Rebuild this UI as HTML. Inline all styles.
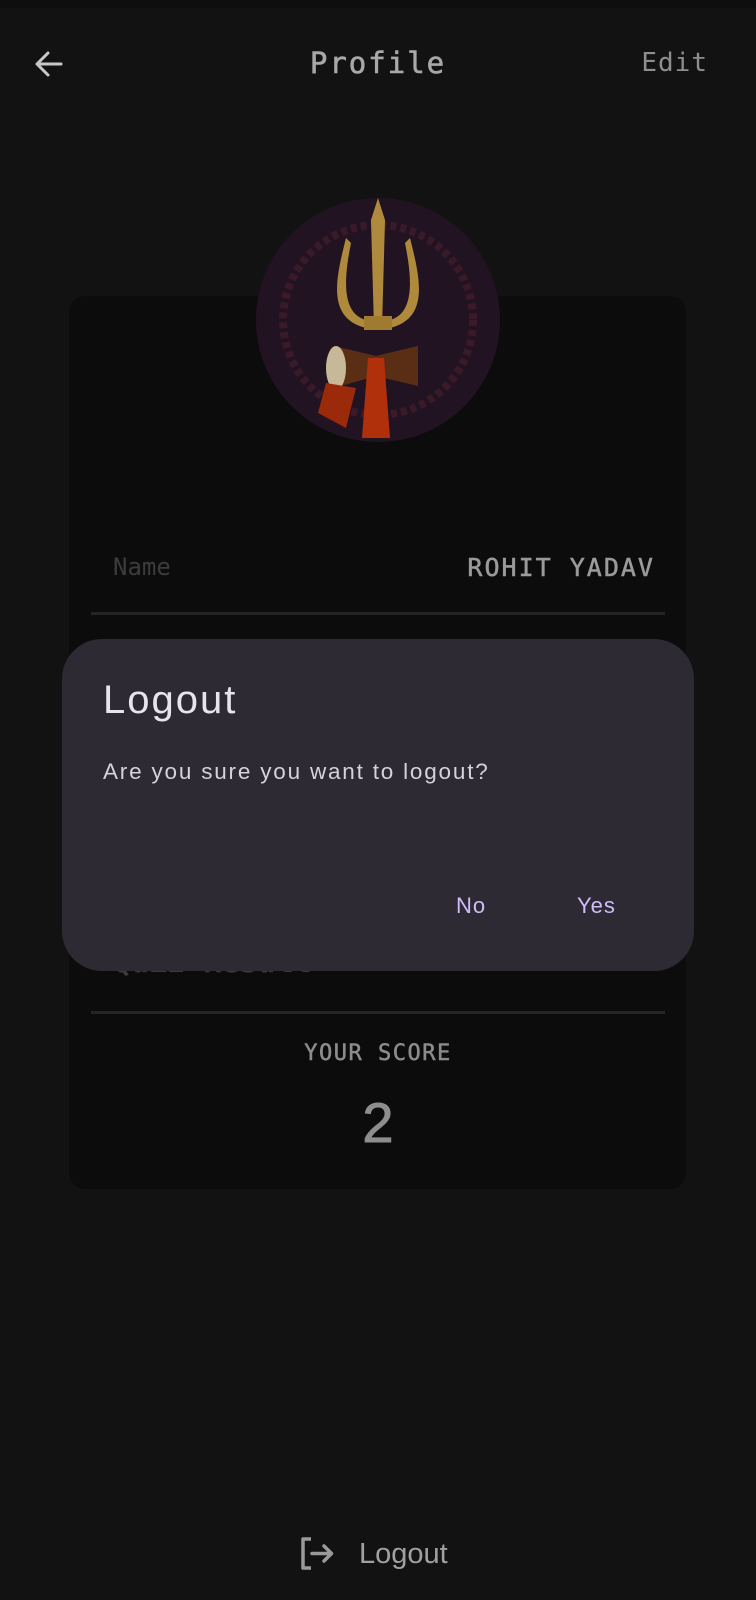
<!DOCTYPE html>
<html><head><meta charset="utf-8"><style>
html,body{margin:0;padding:0;}
body{width:756px;height:1600px;background:#121212;position:relative;overflow:hidden;font-family:"DejaVu Sans Mono","Liberation Mono",monospace;}
.abs{position:absolute;}
.card{left:69px;top:296px;width:617px;height:893px;background:#0c0c0c;border-radius:16px;}
.dlg{left:62px;top:639px;width:632px;height:332px;background:#2d2a33;border-radius:40px;font-family:"Liberation Sans",sans-serif;}
</style></head><body>
<div class="abs" style="left:0;top:0;width:756px;height:8px;background:#0e0e0e"></div>
<svg class="abs" style="left:34px;top:50px" width="30" height="28" viewBox="0 0 30 28"><path d="M27 14H4M14 3L3 14l11 11" stroke="#c8c8c8" stroke-width="3" fill="none" stroke-linecap="round" stroke-linejoin="round"/></svg>
<div class="abs" style="left:278px;top:46px;width:200px;text-align:center;font-size:29px;color:#a8a8a8;letter-spacing:2px;-webkit-text-stroke:0.6px #a8a8a8">Profile</div>
<div class="abs" style="left:630px;top:48px;width:78px;text-align:right;font-size:26px;color:#8e8e8e;letter-spacing:1px">Edit</div>
<div class="abs card"></div>
<svg class="abs" style="left:256px;top:198px" width="244" height="244" viewBox="0 0 244 244">
<circle cx="122" cy="122" r="122" fill="#221322"/>
<circle cx="122" cy="122" r="95" fill="none" stroke="#3a1a28" stroke-width="8" stroke-dasharray="6 4"/>
<path d="M115 22 L122 0 L129 22 L126 130 L118 130 Z" fill="#b08a3c"/>
<path d="M90 40 C80 80 70 120 110 130 L110 122 C85 115 88 80 95 45 Z" fill="#b08a3c"/>
<path d="M154 40 C164 80 174 120 134 130 L134 122 C159 115 156 80 149 45 Z" fill="#b08a3c"/>
<rect x="108" y="118" width="28" height="14" fill="#a07a30"/>
<path d="M78 148 L120 158 L162 148 L162 188 L120 178 L78 190 Z" fill="#5a2e14"/>
<ellipse cx="80" cy="170" rx="10" ry="22" fill="#c8b89a"/>
<path d="M112 160 L128 160 L134 240 L106 240 Z" fill="#b0300c"/>
<path d="M70 185 L100 190 L90 230 L62 215 Z" fill="#9a2a0a"/>
</svg>
<div class="abs" style="left:113px;top:553px;font-size:24px;color:#3c3c3c">Name</div>
<div class="abs" style="left:400px;top:553px;width:255px;text-align:right;font-size:25px;color:#9a9a9a;letter-spacing:2px;-webkit-text-stroke:0.5px #9a9a9a">ROHIT YADAV</div>
<div class="abs" style="left:91px;top:612px;width:574px;height:3px;background:#242424"></div>
<div class="abs" style="left:113px;top:945px;font-size:30px;font-weight:bold;color:#3c3c3c">Quiz Result</div>
<div class="abs" style="left:91px;top:1011px;width:574px;height:3px;background:#242424"></div>
<div class="abs" style="left:228px;top:1041px;width:300px;text-align:center;font-size:22px;color:#8c8c8c;letter-spacing:1.5px;-webkit-text-stroke:0.5px #8c8c8c">YOUR SCORE</div>
<div class="abs" style="left:278px;top:1090px;width:200px;text-align:center;font-family:'Liberation Sans',sans-serif;font-size:56px;color:#8e8e8e;-webkit-text-stroke:1px #8e8e8e">2</div>
<div class="abs dlg">
<div class="abs" style="left:41px;top:39px;font-size:40px;color:#e8e4ee;letter-spacing:2px">Logout</div>
<div class="abs" style="left:41px;top:120px;font-size:22.5px;color:#d6d2dc;letter-spacing:1.8px">Are you sure you want to logout?</div>
<div class="abs" style="left:394px;top:254px;font-size:22px;color:#cdbdf8;letter-spacing:1px">No</div>
<div class="abs" style="left:515px;top:254px;font-size:22px;color:#cdbdf8;letter-spacing:1px">Yes</div>
</div>
<svg class="abs" style="left:300px;top:1537px" width="34" height="33" viewBox="0 0 34 33"><path d="M11 2H3v29h8" stroke="#9a9a9a" stroke-width="3.5" fill="none" stroke-linejoin="round"/><path d="M12 16.5h19M24 9l7.5 7.5L24 24" stroke="#9a9a9a" stroke-width="3.5" fill="none" stroke-linecap="round" stroke-linejoin="round"/></svg>
<div class="abs" style="left:359px;top:1538px;font-family:'Liberation Sans',sans-serif;font-size:29px;color:#a0a0a0">Logout</div>
</body></html>
